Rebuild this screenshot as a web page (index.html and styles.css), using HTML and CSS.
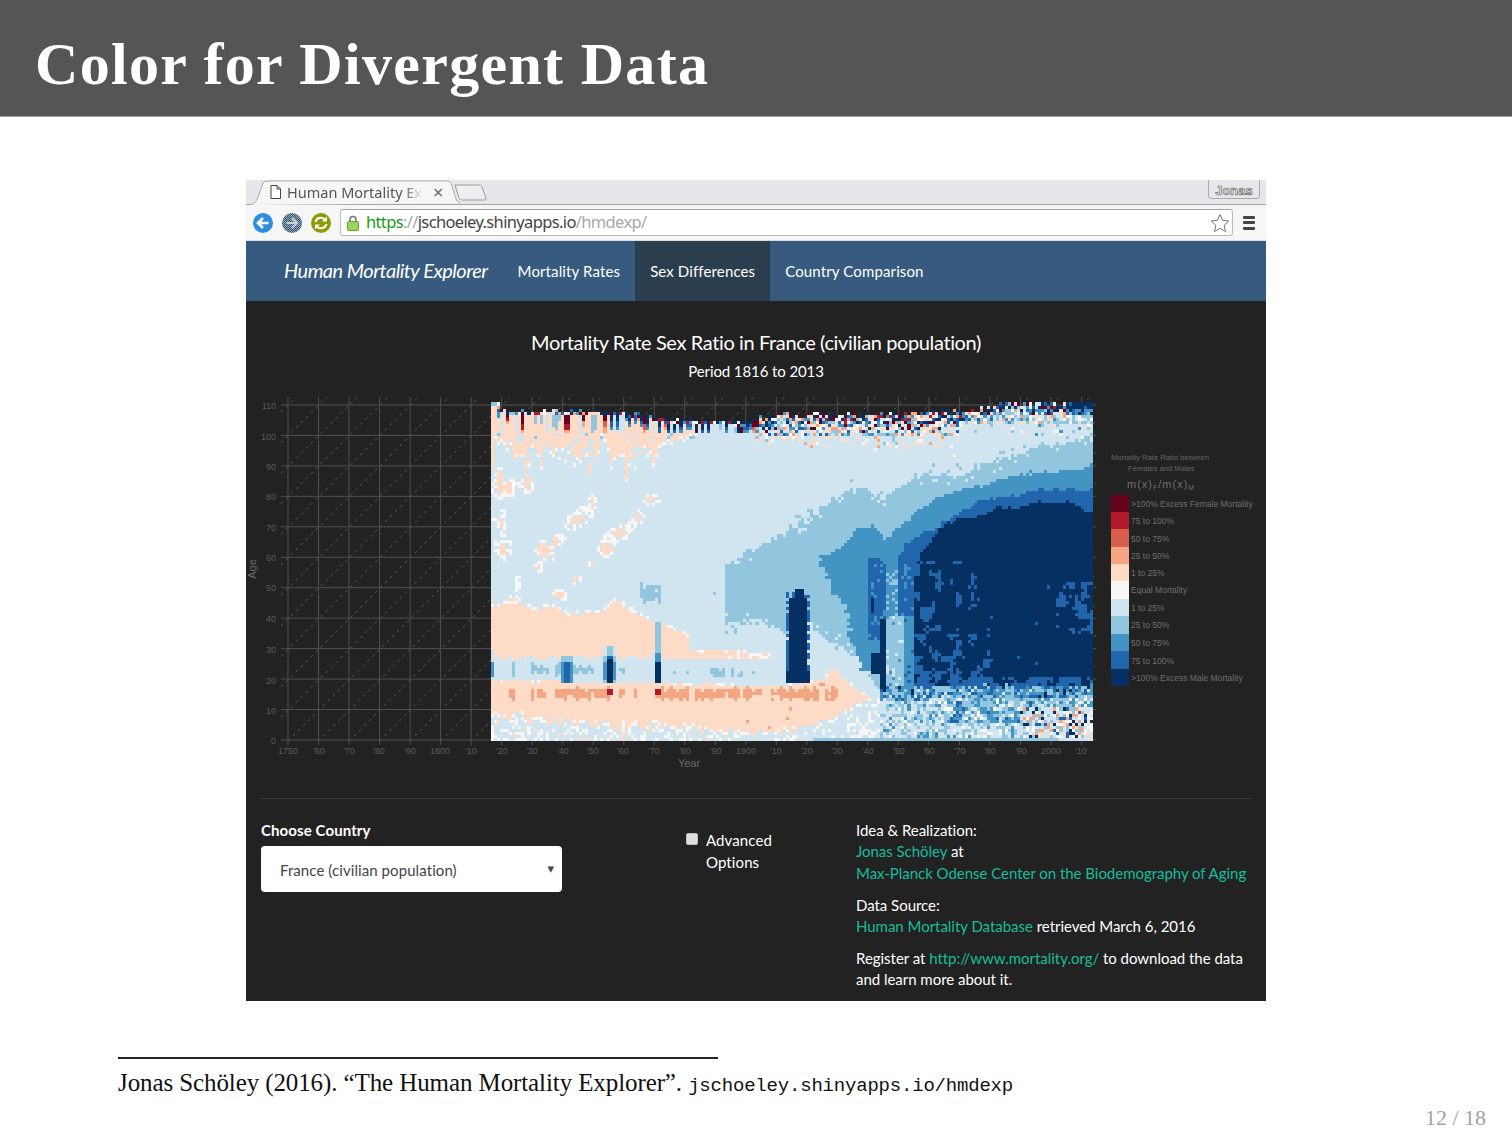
FILE: index.html
```html
<!DOCTYPE html>
<html lang="en">
<head>
<meta charset="utf-8">
<title>Color for Divergent Data</title>
<link rel="stylesheet" href="styles.css">
</head>
<body>
<header class="slide-head"><h1 class="slide-title">Color for Divergent Data</h1></header>
<main class="slide-body">
  <div class="browser">
    <div class="tabstrip">
      <div class="tab">
        <svg class="tab-shape" width="210" height="25" viewBox="0 0 210 25"><path d="M0 25 C5 24 6 22 8 17 L13 3 Q14 1 17 1 L197 1 Q200 1 201 3 L206 19 Q207 22 210 23" fill="#f6f6f6" stroke="#a9a9a9"/></svg>
        <svg class="doc-icon" width="11" height="14" viewBox="0 0 11 14"><path d="M1 .5H7L10.5 4V13.5H1ZM7 .5V4H10.5" fill="#fff" stroke="#444"/></svg>
        <span class="tab-title">Human Mortality Ex</span>
        <span class="tab-close">×</span>
      </div>
      <svg class="newtab" width="33" height="17" viewBox="0 0 33 17"><path d="M1 1H25Q27 1 28 3L32 14Q32.500 16 30 16H8Q6 16 5 14Z" fill="#eceef0" stroke="#9a9a9a"/></svg>
      <div class="profile">Jonas</div>
    </div>
    <div class="toolbar">
      <svg class="nav-btn" width="20" height="20" viewBox="0 0 20 20"><circle cx="10" cy="10" r="10" fill="#2a8fdc"/><path d="M15.500 10H5.500M10 5L5 10L10 15" fill="none" stroke="#fff" stroke-width="2.600"/></svg>
      <svg class="nav-btn" width="20" height="20" viewBox="0 0 20 20"><defs><pattern id="dith" width="2" height="2" patternUnits="userSpaceOnUse"><rect width="2" height="2" fill="#9aa9b6"/><rect width="1" height="1" fill="#2f5070"/><rect x="1" y="1" width="1" height="1" fill="#2f5070"/></pattern></defs><circle cx="10" cy="10" r="10" fill="url(#dith)"/><path d="M4.500 10H14.500M10 5L15 10L10 15" fill="none" stroke="#c8ced4" stroke-width="2.200"/></svg>
      <svg class="nav-btn" width="20" height="20" viewBox="0 0 20 20"><circle cx="10" cy="10" r="10" fill="#8a9c00"/><path d="M4.500 9A5.600 5.600 0 0 1 14.500 7M15.500 11A5.600 5.600 0 0 1 5.500 13" fill="none" stroke="#fff" stroke-width="2"/><path d="M16 3.500V8.500H11ZM4 16.500V11.500H9Z" fill="#fff"/></svg>
      <div class="address">
        <svg class="lock" width="12" height="16" viewBox="0 0 12 16"><path d="M3 7V4.500A3 3 0 0 1 9 4.500V7" fill="none" stroke="#777" stroke-width="1.600"/><rect x=".5" y="6.500" width="11" height="9" rx="1" fill="#9bd45a" stroke="#6d9c35"/></svg>
        <span class="url"><span class="url-https">https</span><span class="url-dim">://</span>jschoeley.shinyapps.io<span class="url-dim">/hmdexp/</span></span>
        <svg class="star" width="20" height="20" viewBox="0 0 20 20"><path d="M10 1.500L12.600 7.300L18.800 8L14.200 12.200L15.500 18.500L10 15.300L4.500 18.500L5.800 12.200L1.200 8L7.400 7.300Z" fill="#fff" stroke="#777"/></svg>
      </div>
      <div class="menu-btn"><span class="menu-bar"></span><span class="menu-bar"></span><span class="menu-bar"></span></div>
    </div>
    <nav class="navbar">
      <span class="brand">Human Mortality Explorer</span>
      <a class="nav-link">Mortality Rates</a>
      <a class="nav-link active">Sex Differences</a>
      <a class="nav-link">Country Comparison</a>
    </nav>
    <section class="app">
      <h2 class="plot-title">Mortality Rate Sex Ratio in France (civilian population)</h2>
      <h3 class="plot-sub">Period 1816 to 2013</h3>
      <svg id="plot" class="plot" width="1020" height="385" viewBox="246 390 1020 385">
        <g id="grid"></g>
        <g id="heat" shape-rendering="crispEdges"></g>
        <g class="tick tick-y">
          <text x="276" y="409">110</text><text x="276" y="440">100</text><text x="276" y="470">90</text><text x="276" y="500">80</text><text x="276" y="531">70</text><text x="276" y="561">60</text><text x="276" y="591">50</text><text x="276" y="622">40</text><text x="276" y="653">30</text><text x="276" y="684">20</text><text x="276" y="714">10</text><text x="276" y="744">0</text>
        </g>
        <g class="tick tick-x">
          <text x="288" y="754">1750</text><text x="319" y="754">'60</text><text x="349" y="754">'70</text><text x="379" y="754">'80</text><text x="410" y="754">'90</text><text x="440" y="754">1800</text><text x="471" y="754">'10</text><text x="502" y="754">'20</text><text x="532" y="754">'30</text><text x="563" y="754">'40</text><text x="593" y="754">'50</text><text x="623" y="754">'60</text><text x="654" y="754">'70</text><text x="685" y="754">'80</text><text x="716" y="754">'90</text><text x="746" y="754">1900</text><text x="776" y="754">'10</text><text x="807" y="754">'20</text><text x="837" y="754">'30</text><text x="868" y="754">'40</text><text x="899" y="754">'50</text><text x="929" y="754">'60</text><text x="960" y="754">'70</text><text x="990" y="754">'80</text><text x="1021" y="754">'90</text><text x="1051" y="754">2000</text><text x="1081" y="754">'10</text>
        </g>
        <text class="axis-label" x="689" y="767">Year</text>
        <text class="axis-label" transform="translate(256 569) rotate(-90)">Age</text>
        <text class="legend-title" x="1111" y="460">Mortality Rate Ratio between</text>
        <text class="legend-title" x="1128" y="471">Females and Males</text>
        <text class="legend-formula" x="1127" y="488">m(x)<tspan class="legend-subs" dy="2">F</tspan><tspan dy="-2">/m(x)</tspan><tspan class="legend-subs" dy="2">M</tspan></text>
        <g id="swatches" shape-rendering="crispEdges"></g>
        <g class="legend-text">
          <text x="1131" y="507">&gt;100% Excess Female Mortality</text>
          <text x="1131" y="524">75 to 100%</text>
          <text x="1131" y="542">50 to 75%</text>
          <text x="1131" y="559">25 to 50%</text>
          <text x="1131" y="576">1 to 25%</text>
          <text x="1131" y="593">Equal Mortality</text>
          <text x="1131" y="611">1 to 25%</text>
          <text x="1131" y="628">25 to 50%</text>
          <text x="1131" y="646">50 to 75%</text>
          <text x="1131" y="664">75 to 100%</text>
          <text x="1131" y="681">&gt;100% Excess Male Mortality</text>
        </g>
      </svg>
      <hr class="rule">
      <div class="controls">
        <div class="col-country">
          <label class="field-label">Choose Country</label>
          <div class="select"><span>France (civilian population)</span><span class="caret">▾</span></div>
        </div>
        <div class="col-check">
          <span class="checkbox"></span>
          <span class="check-label">Advanced Options</span>
        </div>
        <div class="col-info">
          <p>Idea &amp; Realization:<br><a>Jonas Schöley</a> at<br><a>Max-Planck Odense Center on the Biodemography of Aging</a></p>
          <p>Data Source:<br><a>Human Mortality Database</a> retrieved March 6, 2016</p>
          <p>Register at <a>http://www.mortality.org/</a> to download the data and learn more about it.</p>
        </div>
      </div>
    </section>
  </div>
</main>
<footer class="foot">
  <div class="foot-rule"></div>
  <p class="citation">Jonas Schöley (2016). “The Human Mortality Explorer”. <span class="mono">jschoeley.shinyapps.io/hmdexp</span></p>
  <div class="page-num">12 / 18</div>
</footer>
<script src="heatmap.js"></script>
</body>
</html>
```
FILE: styles.css
```css
* { box-sizing: border-box; }
html, body { margin: 0; padding: 0; }
body { background: #fff; width: 1512px; height: 1134px; overflow: hidden; font-family: "Liberation Serif", serif; }

.slide-head { height: 117px; background: #555; border-bottom: 1px solid #9a9a9a; padding: 28px 0 0 35px; }
.slide-title { margin: 0; color: #fff; font: bold 60px/72px "Liberation Serif", serif; letter-spacing: 1.320px; }

.slide-body { padding-top: 63px; }
.browser { width: 1020px; margin: 0 auto; height: 821px; }

.tabstrip { height: 25px; background: #e6e7ea; display: flex; align-items: flex-start; border-bottom: 1px solid #a5a5a5; font-family: "Noto Sans", sans-serif; }
.tab { position: relative; width: 210px; height: 25px; margin-left: 4px; display: flex; align-items: center; padding-left: 20px; flex: none; }
.tab-shape { position: absolute; left: 0; top: 0; }
.doc-icon { position: relative; margin-right: 6px; margin-top: -1px; }
.tab-title { position: relative; width: 136px; margin-top: -2px; overflow: hidden; white-space: nowrap; font-size: 14.500px; color: #555; -webkit-mask-image: linear-gradient(90deg, #000 85%, transparent); mask-image: linear-gradient(90deg, #000 85%, transparent); }
.tab-close { position: relative; margin: -2px 0 0 10px; font-size: 18px; line-height: 20px; color: #666; }
.newtab { margin: 4px 0 0 -6px; flex: none; }
.profile { margin: 0 6px 0 auto; width: 52px; height: 19px; padding-top: 4px; border: 1px solid #aaa; border-top: 0; border-radius: 0 0 4px 4px; font: bold 13px/14px "Liberation Sans", sans-serif; text-align: center; color: #f4f4f4; -webkit-text-stroke: .6px #555; }

.toolbar { height: 36px; background: #f6f6f6; display: flex; align-items: center; padding: 0 10px 0 7px; gap: 9px; border-bottom: 1px solid #dcdcdc; }
.nav-btn { flex: none; }
.address { width: 893px; height: 27px; background: #fff; border: 1px solid #bcbcbc; border-top-color: #a2a2a2; border-radius: 3px; display: flex; align-items: center; padding: 0 2px 0 6px; flex: none; }
.lock { flex: none; margin-right: 7px; }
.url { font: 16.500px/20px "Noto Sans", sans-serif; margin-top: -2px; color: #444; letter-spacing: -.64px; white-space: nowrap; }
.url-https { color: #1a9a1a; }
.url-dim { color: #a9a9a9; }
.star { margin-left: auto; }
.menu-btn { width: 12px; display: flex; flex-direction: column; gap: 2.500px; margin-left: 1px; }
.menu-bar { height: 3px; background: #444; border-radius: 1px; }

.navbar { height: 60px; background: #375a7f; display: flex; align-items: stretch; padding-left: 38px; font-family: "Lato", sans-serif; color: #fff; }
.brand { font-style: italic; font-size: 20px; line-height: 59px; margin-right: 15px; letter-spacing: -.5px; }
.nav-link { padding: 0 15px; font-size: 15px; line-height: 60px; letter-spacing: .13px; }
.nav-link.active { background: #2b3e50; }

.app { background: #222; height: 700px; color: #fff; font-family: "Lato", sans-serif; padding: 0 15px; }
.plot-title { margin: 0; padding-top: 29px; text-align: center; font-size: 20px; font-weight: 400; line-height: 24px; letter-spacing: -.38px; }
.plot-sub { margin: 6px 0 0; text-align: center; font-size: 15px; font-weight: 400; line-height: 22px; letter-spacing: -.1px; }
.plot { display: block; margin: 8px -15px 0; }
.tick text { font: 9px "Liberation Sans", sans-serif; fill: #5c5c5c; }
.tick-y text { text-anchor: end; }
.tick-x text { text-anchor: middle; }
.axis-label { font: 11px "Liberation Sans", sans-serif; fill: #6a6a6a; text-anchor: middle; }
.legend-title { font: 7.650px "Liberation Sans", sans-serif; fill: #666; }
.legend-formula { font: 11px "Liberation Sans", sans-serif; fill: #707070; letter-spacing: 1px; }
.legend-subs { font-size: 7px; }
.legend-text text { font: 8.500px "Liberation Sans", sans-serif; fill: #707070; }

.rule { border: 0; border-top: 1px solid #3c3c3c; margin: 23px 0 0; }
.controls { display: flex; font-size: 15px; }
.col-country { width: 301px; padding-top: 20px; flex: none; }
.field-label { display: block; font-weight: 700; line-height: 22px; margin-bottom: 5px; letter-spacing: .1px; }
.select { height: 46px; padding: 2px 8px 0 19px; background: #fff; border-radius: 4px; color: #444; display: flex; align-items: center; justify-content: space-between; letter-spacing: .08px; }
.caret { font: 13px "DejaVu Sans", sans-serif; color: #444; margin-top: -4px; }
.col-check { width: 170px; margin-left: 124px; padding-top: 30px; display: flex; flex: none; }
.checkbox { width: 12px; height: 12px; margin-top: 4px; background: #ddd; border: 1px solid #bbb; border-radius: 2px; flex: none; }
.check-label { width: 80px; margin-left: 8px; line-height: 22px; letter-spacing: .1px; }
.col-info { padding-top: 21px; width: 395px; line-height: 21.300px; letter-spacing: -.03px; }
.col-info p { margin: 0 0 10.800px; }
.col-info a { color: #18bc9c; }

.foot { padding: 56px 0 0 118px; }
.foot-rule { width: 600px; height: 2px; background: #222; }
.citation { margin: 9px 0 0; font-size: 25px; line-height: 30px; color: #111; white-space: nowrap; letter-spacing: -.1px; }
.mono { font: 19px "Liberation Mono", monospace; letter-spacing: -.2px; }
.page-num { margin: 7px 0 0 1307px; font-size: 22px; color: #a3a3a3; white-space: nowrap; }
```
FILE: heatmap.js
```js
(function () {
  var COLORS = ['#67001f','#b2182b','#d6604d','#f4a582','#fddbc7','#f7f7f7','#d1e5f0','#92c5de','#4393c3','#2166ac','#053061'];
  var NS = 'http://www.w3.org/2000/svg';

  function h(a, b, c) { var s = Math.sin(a * 127.1 + b * 311.7 + c * 74.7) * 43758.5453; return s - Math.floor(s); }
  function smooth(x, y, sc, seed) {
    var fx = x / sc, fy = y / sc, ix = Math.floor(fx), iy = Math.floor(fy), u = fx - ix, v = fy - iy;
    u = u * u * (3 - 2 * u); v = v * v * (3 - 2 * v);
    var a = h(ix, iy, seed), b = h(ix + 1, iy, seed), c = h(ix, iy + 1, seed), d = h(ix + 1, iy + 1, seed);
    return a + (b - a) * u + (c - a) * v + (a - b - c + d) * u * v;
  }
  function pl(p, x) {
    if (x <= p[0][0]) return p[0][1];
    for (var k = 1; k < p.length; k++) if (x <= p[k][0]) {
      return p[k - 1][1] + (p[k][1] - p[k - 1][1]) * (x - p[k - 1][0]) / (p[k][0] - p[k - 1][0]);
    }
    return p[p.length - 1][1];
  }
  function pick(arr, r) { return arr[Math.floor(r * arr.length) % arr.length]; }

  var TOP = [[491,402],[497,402],[500,408],[512,412],[600,412],[640,415],[670,420],[750,423],[780,418],[900,417],[970,414],[990,410],[1013,402],[1093,402]];
  var C7 = [[725,565],[745,555],[760,545],[770,540],[780,533],[807,518],[830,505],[843,492],[863,488],[880,502],[897,488],[913,475],[930,475],[960,475],[993,462],[1033,448],[1067,442],[1093,435]];
  var C7LOW = [[725,625],[763,620],[790,637],[807,620],[830,640],[863,660],[877,690]];
  var C8 = [[820,562],[840,550],[855,530],[875,525],[885,540],[895,530],[915,513],[935,500],[960,490],[990,483],[1020,475],[1050,472],[1093,467]];
  var C9 = [[897,560],[905,545],[915,535],[940,525],[980,502],[1013,495],[1047,490],[1093,490]];
  var C10 = [[913,568],[925,548],[940,528],[967,518],[1000,508],[1047,503],[1067,502],[1093,515]];
  var L8 = [[560,820],[590,833],[615,850],[640,850],[660,860]];
  var PA = [[491,608],[505,603],[525,605],[535,612],[550,607],[560,610],[570,615],[600,613],[615,600],[625,607],[640,618],[652,622]];
  var PB_TOP = [[491,680],[780,686],[823,680],[833,667],[853,687],[867,697],[880,699]];
  var PB_BOT = [[491,714],[560,722],[600,724],[700,730],[780,733],[813,727],[840,713],[867,700],[880,699]];
  var BLOBS = [
    [499,483,4,15],[509,488,5,8],[528,483,3,8],[593,503,3,6],[578,520,8,6],[571,526,4,3],[544,550,7,8],[539,568,2,5],
    [503,523,2,12],[503,550,3,8],[555,541,4,5],[619,533,8,5],[606,548,6,7],[638,518,5,5],[593,565,2,4],[576,580,5,3],
    [518,583,1.500,6],[513,600,6,4],[560,595,5,5],[652,500,6,3]
  ];
  var WHITE = [[519,485,8,4],[506,547,7,9],[560,537,6,6],[496,545,3,6],[586,513,9,7],[613,538,9,9],[630,525,6,5],[549,556,6,6],[494,520,2,4],[494,490,3,3],[500,497,3,3]];
  var P7 = [[512,516,660,680],[530,533,660,676],[535,550,664,676],[554,562,662,678],[573,593,664,676],[620,625,667,675],[672,675,667,675],[685,690,669,677],[710,725,667,680],[730,733,665,680],[737,757,671,676],[768,773,675,677],[780,788,674,677],[640,660,582,606],[712,716,588,602],[686,689,572,580]];
  var CORE = [[508,514],[530,533],[538,546],[554,610],[620,625],[633,636],[655,690],[695,740],[743,762],[768,776],[778,820],[825,840]];

  function inBlob(list, X, Y, pad) {
    for (var k = 0; k < list.length; k++) {
      var b = list[k], dx = (X - b[0]) / (b[2] + pad), dy = (Y - b[1]) / (b[3] + pad);
      if (dx * dx + dy * dy < 1) return true;
    }
    return false;
  }
  function inRanges(list, X) { for (var k = 0; k < list.length; k++) if (X >= list[k][0] && X <= list[k][1]) return true; return false; }

  function topZone(i, j, X, Y, T) {
    var d = Y - T, r = h(i, j, 11), ct = h(i, 0, 1), dd = 8 + h(i, 0, 13) * 16;
    if (X < 757) {
      if (d < 4) return pick(X < 600 ? [10,9,0,5,1,3,8,7,4,6,7,4] : [10,10,9,0,5,10,1,8], r);
      if (X >= 600) {
        if (ct < .34 && d < dd) return d < dd * .55 ? 10 : d < dd * .8 ? 9 : 8;
        if (ct < .46 && d < dd) return d < dd * .5 ? 0 : d < dd * .75 ? 2 : 3;
      } else {
        if (ct < .1 && d < dd + 4) return d < (dd + 4) * .55 ? 0 : d < (dd + 4) * .75 ? 1 : 3;
        if (ct < .18 && d < dd) return d < dd * .5 ? 9 : 8;
      }
      if (ct < .42 && d < dd) return 7;
      if (ct < .8 && X < 700) return 4;
      if (ct < .6) return d < dd ? 7 : 6;
      return 6;
    }
    if (X > 1066) {
      if (d < 7) return r < .85 ? 10 : 9;
      if (d < 13) return pick([9,8,10,7,8], r);
      return pick([7,7,6,8,7,5,6], r);
    }
    if (d < 6) return pick([10,0,5,4,9,10,3,8,1,6,10], r);
    if (d < 11) return pick([10,9,4,3,6,5,7,0,8], r);
    if (X < 960) {
      if (d < 16) return pick([4,9,3,6,7,10,5,8,4,0], r);
      return pick([4,4,3,6,7,7,5,8,6,6,9], r);
    }
    return pick([6,7,7,4,5,8,6,7,6,3], r);
  }

  function cls(i, j) {
    var X = 491 + 3.04 * (i + .5), Y = 741 - 3.05 * (j + .5);
    var T = pl(TOP, X) - h(i, 0, 7) * (X > 750 ? 7 : 2.500);
    if (X < 497) T = 402;
    if (X > 1020) T = 402 + h(i, 0, 7) * 3;
    if (X > 1066) T = 402;
    if (Y < T) return -1;
    var r = h(i, j, 3), jit = (smooth(X, Y, 12, 1) - .5) * 10 + (r - .5) * 6;
    var topBottom = X < 757 ? 434 : X < 960 ? 436 : 425;
    if (Y < topBottom) return topZone(i, j, X, Y, T);

    // war spikes and other event columns
    if (X >= 787 && X <= 811 && Y >= 587 && Y <= 682) {
      var coreW = Y < 597 ? (X >= 795 && X <= 803) : Y > 672 ? true : (X >= 790 && X <= 807);
      if (coreW) return 10;
      if (Y > 592 && r < .7) return 9;
    }
    if (X >= 880 && X <= 885 && Y >= 620 && Y <= 690) return 10;
    if (X >= 872 && X <= 880 && Y >= 653 && Y <= 673) return 10;
    if (X >= 872 && X <= 875 && Y >= 597 && Y <= 612) return 10;
    if (X >= 867 && X <= 885 && Y >= 558 && Y <= 640 && r < .85) return 9;
    if (X >= 604 && X <= 616 && Y >= 645 && Y <= 683) {
      if (Y < 656) return X > 607 && X < 613 ? 7 : 6;
      if (X > 608 && X < 612 && Y > 658) return 10;
      if (X > 606 && X < 614) return 9;
      return Y > 662 && Y < 680 ? 8 : 7;
    }
    if (X >= 652 && X <= 662 && Y >= 622 && Y <= 682) {
      if (Y < 654) return X > 655 && X < 660 ? 7 : (X < 654 ? 4 : 6);
      if (X > 654.500 && X < 660.500) return Y > 662 ? 10 : 8;
      return 6;
    }
    if (X >= 562 && X <= 574 && Y >= 655 && Y <= 682) {
      if (Y < 662) return 7;
      if (X > 565 && X < 571) return 9;
      return 8;
    }
    if (X < 495 && Y > 662 && Y < 676) return 8;
    if (Y >= 689 && Y <= 695 && ((X > 608 && X < 612) || (X > 656 && X < 660))) return 1;

    // lower right: noisy young ages of the modern era
    if (X >= 880) {
      var bottom = 687 + (h(i, 0, 5) - .5) * 6;
      if (Y > bottom) {
        if (Y > 738) return X < 1060 ? 7 : 6;
        var v = h(i, j, 21), sm = smooth(X, Y, 8, 22);
        if (Y < 698) return pick([9,8,8,7,7,8,7,9,10,8,7,6], v);
        if (X > 1020 && Y > 708) return pick([6,7,5,5,6,6,7,10,9,4,7,6,5,6,3], v);
        if (X < 930 && Y > 700) return pick([7,6,6,7,6,8,6,5,7,6], v);
        if (Y < 722) return sm > .62 ? pick([8,8,7,9], v) : pick([7,8,7,6,7,6,7,8,5], v);
        return pick([7,6,6,7,6,7,6,5,8], v);
      }
    }

    // peach bands of the young ages, before 1950
    if (X < 880 && Y > 598) {
      if (Y > 738 && X > 813) return 7;
      var ptop = pl(PB_TOP, X) + jit * .25, pbot = pl(PB_BOT, X) + jit * .35 + (h(i, 0, 9) - .5) * 9;
      if (Y >= ptop && Y <= pbot) {
        if (Y < ptop + 1.500 && r < .3) return 5;
        if (Y > pbot - 2 && r < .5) return 5;
        if (Math.abs(Y - 694) < 2.800 + h(i, 0, 8) * 4 && inRanges(CORE, X) && smooth(X, Y, 6, 9) > .16) return X > 838 ? 4 : 3;
        if (X > 700 && h(i, j, 41) < .015) return 3;
        return 4;
      }
      if (Y > pbot) return h(i, j, 23) < .27 ? 5 : (h(i, j, 24) < .1 && X < 780 ? 4 : 6);
      if (X < 653 && Y < 659) {
        var a = pl(PA, X) + jit * .3;
        if (Y > a) return Y > 656 + r * 3 ? 6 : (X < 495 && Y > 648 ? 6 : 4);
        if (Y > a - 3 && r < .6) return 5;
      }
      if (X >= 662 && X < 690) {
        var a2 = pl([[662,622],[680,633],[690,640]], X) + jit * .4;
        if (Y > a2 && Y < 659) return 4;
        if (Y > a2 - 3 && Y < 659 && r < .6) return 5;
      }
      if (X >= 690 && X < 770 && Y > 650 + (X > 747 ? 2 : 0) && Y < 660 - (X > 747 ? 2 : 0)) return r < (X > 747 ? .5 : .85) ? 4 : 5;
      if (Y > 648 && Y < 684) {
        for (var k = 0; k < P7.length; k++) {
          var q = P7[k];
          if (X >= q[0] && X <= q[1] && Y >= q[2] + h(i, 0, 12) * 5 && Y <= q[3] - h(i, 0, 14) * 5) return 7;
        }
      }
    }
    for (var m = 0; m < P7.length; m++) {
      var q2 = P7[m];
      if (q2[2] < 640 && X >= q2[0] && X <= q2[1] && Y >= q2[2] + h(i, 0, 12) * 8 && Y <= q2[3] - h(i, 0, 14) * 8 && r < .9) return 7;
    }

    // upper peach columns of the 19th century
    if (X < 700 && Y < 500) {
      var fade = X < 640 ? 1 : (700 - X) / 60;
      var L = (smooth(X, 0, 7, 2) * .6 + Math.pow(h(i, 0, 2), 2) * .5) * 46 * fade;
      if (Y < 434 + L) {
        var w = smooth(X, Y, 5, 31);
        if (Y > 434 + L - 3) return r < .7 ? 5 : 4;
        if (w > .3) return 4;
      }
    }
    if (X < 700) {
      if (inBlob(BLOBS, X, Y, -.5) && r < .94) return 4;
      if (inBlob(BLOBS, X, Y, 2.500) && r < .6) return 5;
      if (inBlob(WHITE, X, Y, 0) && r < .72) return 5;
      if (Y < 438 && h(i, j, 33) < .3) return 7;
      return 6;
    }

    // peach and white flecks under the noisy top
    if (X >= 757 && X < 960 && Y < 456) {
      var fl = h(i, j, 51), depth = (Y - 436) / 20;
      if (fl * .7 + smooth(X, Y, 6, 55) * .3 < .42 * (1 - depth)) return pick([4,4,4,3,5,7,4], h(i, j, 52));
      if (fl < .04) return 5;
    }
    if (X >= 960 && Y < 440) {
      var g = h(i, j, 53);
      if (g < .12) return pick([4,5,5,8,7], h(i, j, 54));
    }

    // smooth blue surface of excess male mortality
    var wide = (h(i, j, 62) - .5) * 26;
    var yy = Y + jit * .5 + (h(i, j, 61) < .28 ? wide : 0);
    if (X < 725) return 6;
    var c = 6;
    if (yy > pl(C7, X)) c = 7;
    if (X < 885) {
      if (yy > pl(C7LOW, X)) c = 6;
      if (c === 7 && X + (r - .5) * 8 > pl(L8, Y) + jit * .4 && Y < 672 && Y > 555) c = 8;
      if (Y + jit * .5 > pl(C8, X) && X > 820 && Y < 672 && X + (r - .5) * 8 > pl(L8, Y)) c = 8;
      if (X > 850 && X < 867 && Y < 558 && Y + jit * .5 > pl(C8, X)) c = 8;
      return c;
    }
    var yz = Y + jit * .5;
    if (yz > pl(C8, X)) c = 8;
    if (X >= 897 && yz > pl(C9, X)) c = 9;
    if (X >= 913 && yz > pl(C10, X)) c = 10;
    if (Y > 565 && X < 913) {
      if (X > 897 && Y < 615) return r < .88 ? 9 : 8;
      if (X < 897 && Y < 615) return r < .75 ? 8 : 7;
      if (X > 905) return r < .85 ? 8 : 9;
      return r < .82 ? 7 : (r < .94 ? 6 : 8);
    }
    if (c === 10 && Y > 560) {
      var f = X < 1000 ? .42 - (X - 913) / 87 * .2 : .1;
      if (X > 1055 && Y > 583 && Y < 635) f = .4;
      if (Y > 676) f = .5;
      var s = smooth(X, Y, 7, 3) * .72 + h(i, j, 71) * .28;
      if (s < f) return 9;
    }
    return c;
  }

  var paths = {};
  for (var i = 0; i < 198; i++) {
    var x0 = Math.round(491 + 3.04 * i), x1 = Math.round(491 + 3.04 * (i + 1));
    for (var j = 0; j <= 110; j++) {
      var c = cls(i, j);
      if (c < 0) continue;
      var y1 = Math.round(741 - 3.05 * j), y0 = Math.round(741 - 3.05 * (j + 1));
      paths[c] = (paths[c] || '') + 'M' + x0 + ' ' + y0 + 'h' + (x1 - x0) + 'v' + (y1 - y0) + 'h' + (x0 - x1) + 'z';
    }
  }
  var heat = document.getElementById('heat');
  Object.keys(paths).forEach(function (k) {
    var p = document.createElementNS(NS, 'path');
    p.setAttribute('d', paths[k]);
    p.setAttribute('fill', COLORS[k]);
    heat.appendChild(p);
  });

  var grid = document.getElementById('grid'), d = '', ddiag = '';
  for (var a = 0; a <= 11; a++) { var yy = 405 + 30.45 * a; d += 'M281 ' + yy + 'H1096'; }
  for (var b = 0; b <= 26; b++) { var xx = 288 + 30.52 * b; d += 'M' + xx + ' 397V745'; }
  for (var e = -12; e <= 27; e++) {
    var x = 288 + 30.52 * e;
    var t0 = Math.max(0, 281 - x);
    var t1 = Math.min(344, 1096 - x);
    if (t1 <= t0) continue;
    ddiag += 'M' + (x + t0) + ' ' + (741 - t0) + 'L' + (x + t1) + ' ' + (741 - t1);
  }
  var g1 = document.createElementNS(NS, 'path');
  g1.setAttribute('d', d); g1.setAttribute('stroke', '#505050'); g1.setAttribute('fill', 'none'); g1.setAttribute('stroke-width', '1');
  var g2 = document.createElementNS(NS, 'path');
  g2.setAttribute('d', ddiag); g2.setAttribute('stroke', '#5e5e5e'); g2.setAttribute('fill', 'none'); g2.setAttribute('stroke-dasharray', '3 4');
  grid.appendChild(g2); grid.appendChild(g1);

  var sw = document.getElementById('swatches');
  var ys = [495,512,529,547,564,581,599,616,634,651,669,686];
  for (var n = 0; n < 11; n++) {
    var rc = document.createElementNS(NS, 'rect');
    rc.setAttribute('x', 1111); rc.setAttribute('y', ys[n]); rc.setAttribute('width', 18); rc.setAttribute('height', ys[n + 1] - ys[n]);
    rc.setAttribute('fill', COLORS[n]);
    sw.appendChild(rc);
  }
})();
```
